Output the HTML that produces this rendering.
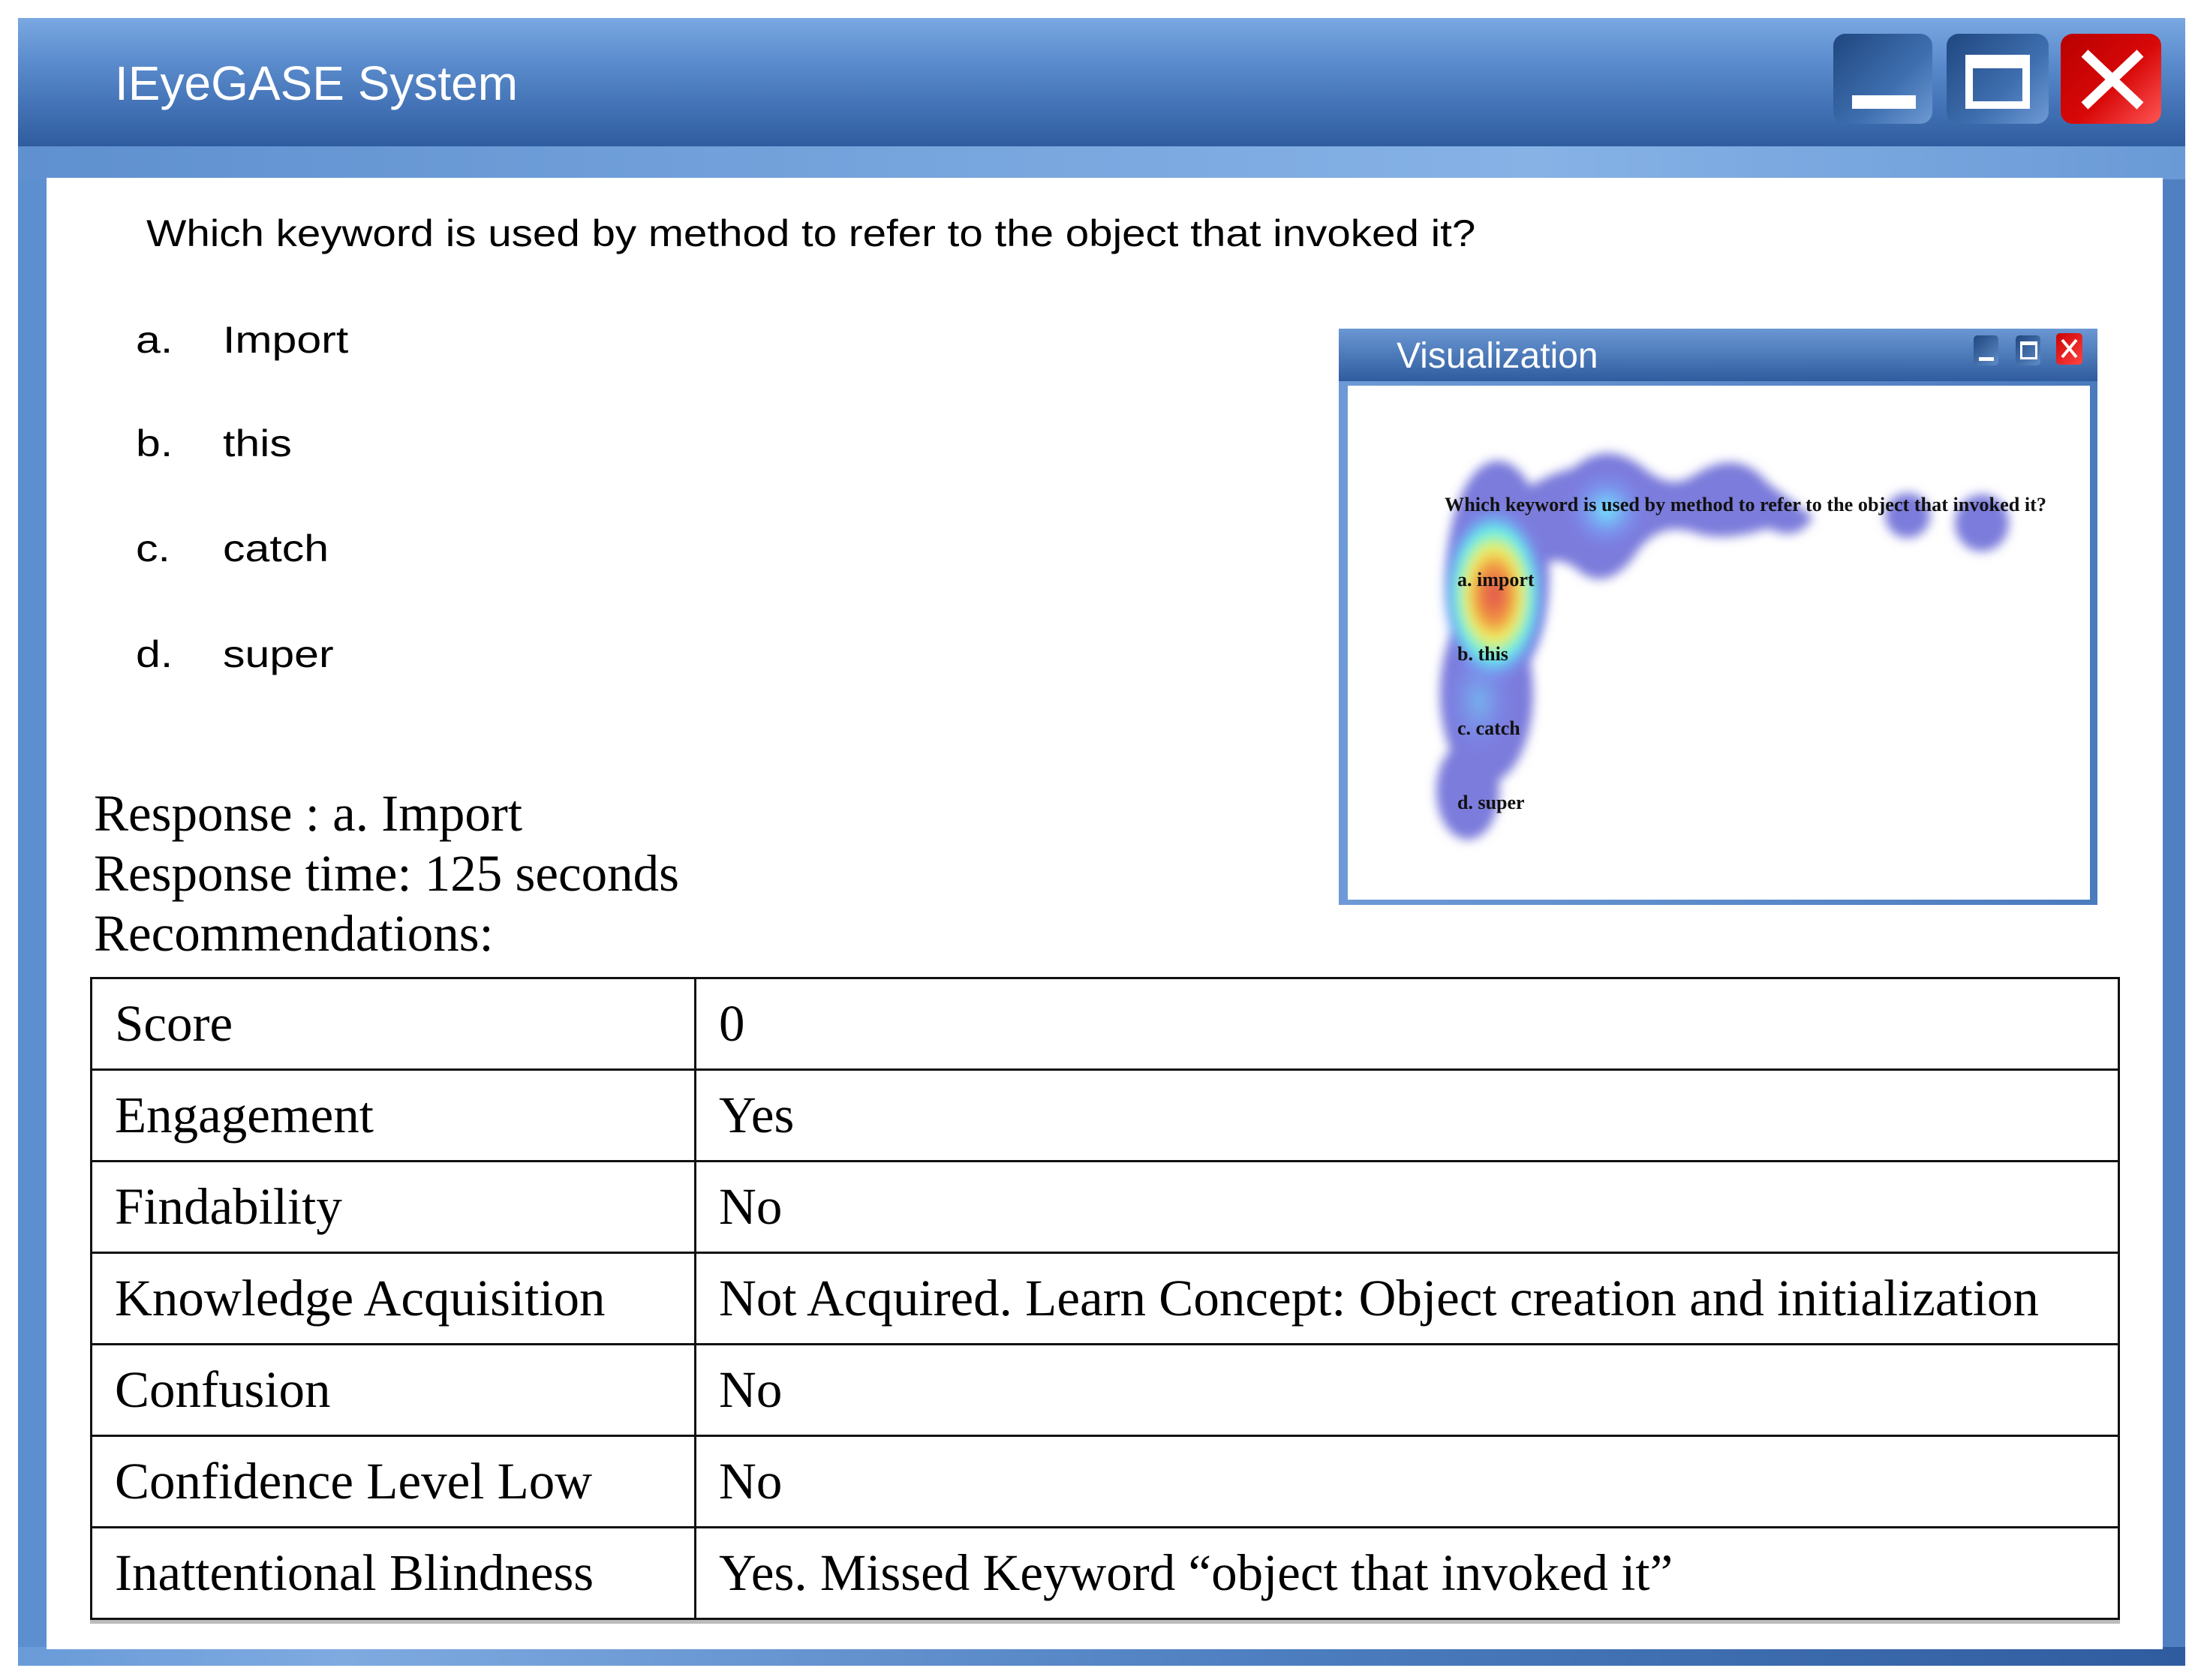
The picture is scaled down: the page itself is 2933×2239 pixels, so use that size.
<!DOCTYPE html>
<html><head><meta charset="utf-8"><style>
html,body{margin:0;padding:0;width:2933px;height:2239px;background:#fff;overflow:hidden;position:relative}
.abs{position:absolute}
.sans{font-family:"Liberation Sans",sans-serif}
.serif{font-family:"Liberation Serif",serif}
#frame{left:24px;top:24px;width:2888px;height:2196px;background:linear-gradient(90deg,#5c8fd0,#6f9fdc 40%,#4f80c2);}
#title{left:24px;top:24px;width:2888px;height:171px;background:linear-gradient(180deg,#7aa8e2 0%,#5a8bcc 35%,#4272b5 70%,#2f5c9e 100%);}
#band{left:24px;top:195px;width:2888px;height:44px;background:linear-gradient(90deg,#5f90cf,#86b2e6 70%,#6a9ad6);}
#bot{left:24px;top:2195px;width:2888px;height:25px;background:linear-gradient(90deg,#6a9bd8,#7eaae0 15%,#4b7cbe 60%,#2f5c9e);}
#panel{left:62px;top:237px;width:2820px;height:1961px;background:#fff;}
.btn{top:45px;height:120px;border-radius:16px}
table{border-collapse:collapse}
td{border:3px solid #111;height:119px;font-size:69px;font-family:"Liberation Serif",serif;padding:0 0 0 30px;color:#000}
.opt{font-size:50px;transform:scaleX(1.18);transform-origin:0 50%}
</style></head><body>
<div id="frame" class="abs"></div>
<div id="title" class="abs"></div>
<div id="band" class="abs"></div>
<div id="bot" class="abs"></div>
<div id="panel" class="abs"></div>
<div class="abs sans" style="left:153px;top:74px;font-size:64px;color:#fff;">IEyeGASE System</div>
<div class="abs btn" style="left:2443px;width:132px;background:linear-gradient(135deg,#1f477f,#3f6fb0 60%,#6e9ad4)"></div>
<div class="abs" style="left:2468px;top:127px;width:85px;height:18px;background:#fff"></div>
<div class="abs btn" style="left:2594px;width:136px;background:linear-gradient(135deg,#1f477f,#3f6fb0 60%,#6e9ad4)"></div>
<div class="abs" style="left:2619px;top:73px;width:66px;height:44px;border:10px solid #fff;border-top-width:18px"></div>
<div class="abs btn" style="left:2746px;width:134px;background:linear-gradient(135deg,#b80000,#d80808 55%,#ff5555)"></div>
<svg class="abs" style="left:2746px;top:45px" width="134" height="120"><path d="M32 26 L106 96 M106 26 L32 96" stroke="#fff" stroke-width="13"/></svg>

<div class="abs sans" style="left:195px;top:282px;font-size:50px;color:#000;transform:scaleX(1.13);transform-origin:0 50%;white-space:nowrap">Which keyword is used by method to refer to the object that invoked it?</div>
<div class="abs sans opt" style="left:181px;top:424px;">a.</div><div class="abs sans opt" style="left:297px;top:424px;">Import</div>
<div class="abs sans opt" style="left:181px;top:562px;">b.</div><div class="abs sans opt" style="left:297px;top:562px;">this</div>
<div class="abs sans opt" style="left:181px;top:702px;">c.</div><div class="abs sans opt" style="left:297px;top:702px;">catch</div>
<div class="abs sans opt" style="left:181px;top:843px;">d.</div><div class="abs sans opt" style="left:297px;top:843px;">super</div>

<div class="abs serif" style="left:125px;top:1044px;font-size:69px;line-height:80px;">Response : a. Import<br>Response time: 125 seconds<br>Recommendations:</div>

<table class="abs" style="left:120px;top:1302px;width:2705px;box-shadow:0 5px 0 #bbb">
<tr><td style="width:772px">Score</td><td>0</td></tr>
<tr><td>Engagement</td><td>Yes</td></tr>
<tr><td>Findability</td><td>No</td></tr>
<tr><td>Knowledge Acquisition</td><td>Not Acquired. Learn Concept: Object creation and initialization</td></tr>
<tr><td>Confusion</td><td>No</td></tr>
<tr><td>Confidence Level Low</td><td>No</td></tr>
<tr><td>Inattentional Blindness</td><td>Yes. Missed Keyword “object that invoked it”</td></tr>
</table>

<div class="abs" style="left:1784px;top:438px;width:1011px;height:768px;background:linear-gradient(90deg,#6d9ad6,#4a7bbd)"></div>
<div class="abs" style="left:1784px;top:438px;width:1011px;height:70px;background:linear-gradient(180deg,#6b98d4,#2f5c9e)"></div>
<div class="abs" style="left:1796px;top:514px;width:989px;height:685px;background:#fff"></div>
<div class="abs sans" style="left:1861px;top:447px;font-size:48px;color:#fff">Visualization</div>
<div class="abs" style="left:2630px;top:447px;width:33px;height:40px;border-radius:5px;background:linear-gradient(135deg,#1f477f,#5f8cc8)"></div>
<div class="abs" style="left:2637px;top:476px;width:20px;height:5px;background:#fff"></div>
<div class="abs" style="left:2686px;top:447px;width:33px;height:40px;border-radius:5px;background:linear-gradient(135deg,#1f477f,#5f8cc8)"></div>
<div class="abs" style="left:2692px;top:455px;width:17px;height:16px;border:3px solid #fff;border-top-width:5px"></div>
<div class="abs" style="left:2740px;top:444px;width:35px;height:42px;border-radius:5px;background:linear-gradient(135deg,#c00,#f44)"></div>
<svg class="abs" style="left:2740px;top:444px" width="35" height="42"><path d="M8 9 L27 32 M27 9 L8 32" stroke="#fff" stroke-width="4"/></svg>

<svg class="abs" style="left:1796px;top:514px" width="989" height="685">
<defs>
<filter id="b" x="-50%" y="-50%" width="200%" height="200%"><feGaussianBlur stdDeviation="7"/></filter>
<radialGradient id="hot" cx="0.5" cy="0.5" r="0.5"><stop offset="0" stop-color="#e05050"/><stop offset="0.3" stop-color="#f09040"/><stop offset="0.5" stop-color="#f0f060"/><stop offset="0.72" stop-color="#60f0f0"/><stop offset="1" stop-color="#8080ff" stop-opacity="0"/></radialGradient>
<radialGradient id="cy" cx="0.5" cy="0.5" r="0.5"><stop offset="0" stop-color="#70f0ff"/><stop offset="1" stop-color="#8080ff" stop-opacity="0"/></radialGradient>
</defs>
<g fill="#7b7cdc" filter="url(#b)">
<ellipse cx="200" cy="250" rx="68" ry="150"/>
<ellipse cx="185" cy="410" rx="62" ry="120"/>
<ellipse cx="160" cy="540" rx="42" ry="65"/>
<path d="M180 180 Q250 120 300 110 Q345 70 395 110 Q430 140 460 120 Q520 80 560 130 Q600 160 620 175 Q600 210 560 190 Q500 210 460 195 Q410 180 380 230 Q340 280 300 240 Q260 220 250 260 Z"/>
<circle cx="746" cy="173" r="30"/>
<ellipse cx="845" cy="183" rx="36" ry="38"/>
</g>
<ellipse cx="345" cy="165" rx="55" ry="55" fill="url(#cy)" filter="url(#b)"/>
<ellipse cx="175" cy="420" rx="50" ry="80" fill="url(#cy)" opacity="0.5" filter="url(#b)"/>
<ellipse cx="195" cy="278" rx="72" ry="120" fill="url(#hot)" filter="url(#b)"/>
<g font-family="Liberation Serif,serif" font-weight="bold" font-size="26" fill="#111">
<text x="129" y="167" textLength="802" lengthAdjust="spacingAndGlyphs">Which keyword is used by method to refer to the object that invoked it?</text>
<text x="146" y="267">a. import</text>
<text x="146" y="366">b. this</text>
<text x="146" y="465">c. catch</text>
<text x="146" y="564">d. super</text>
</g>
</svg>
</body></html>
